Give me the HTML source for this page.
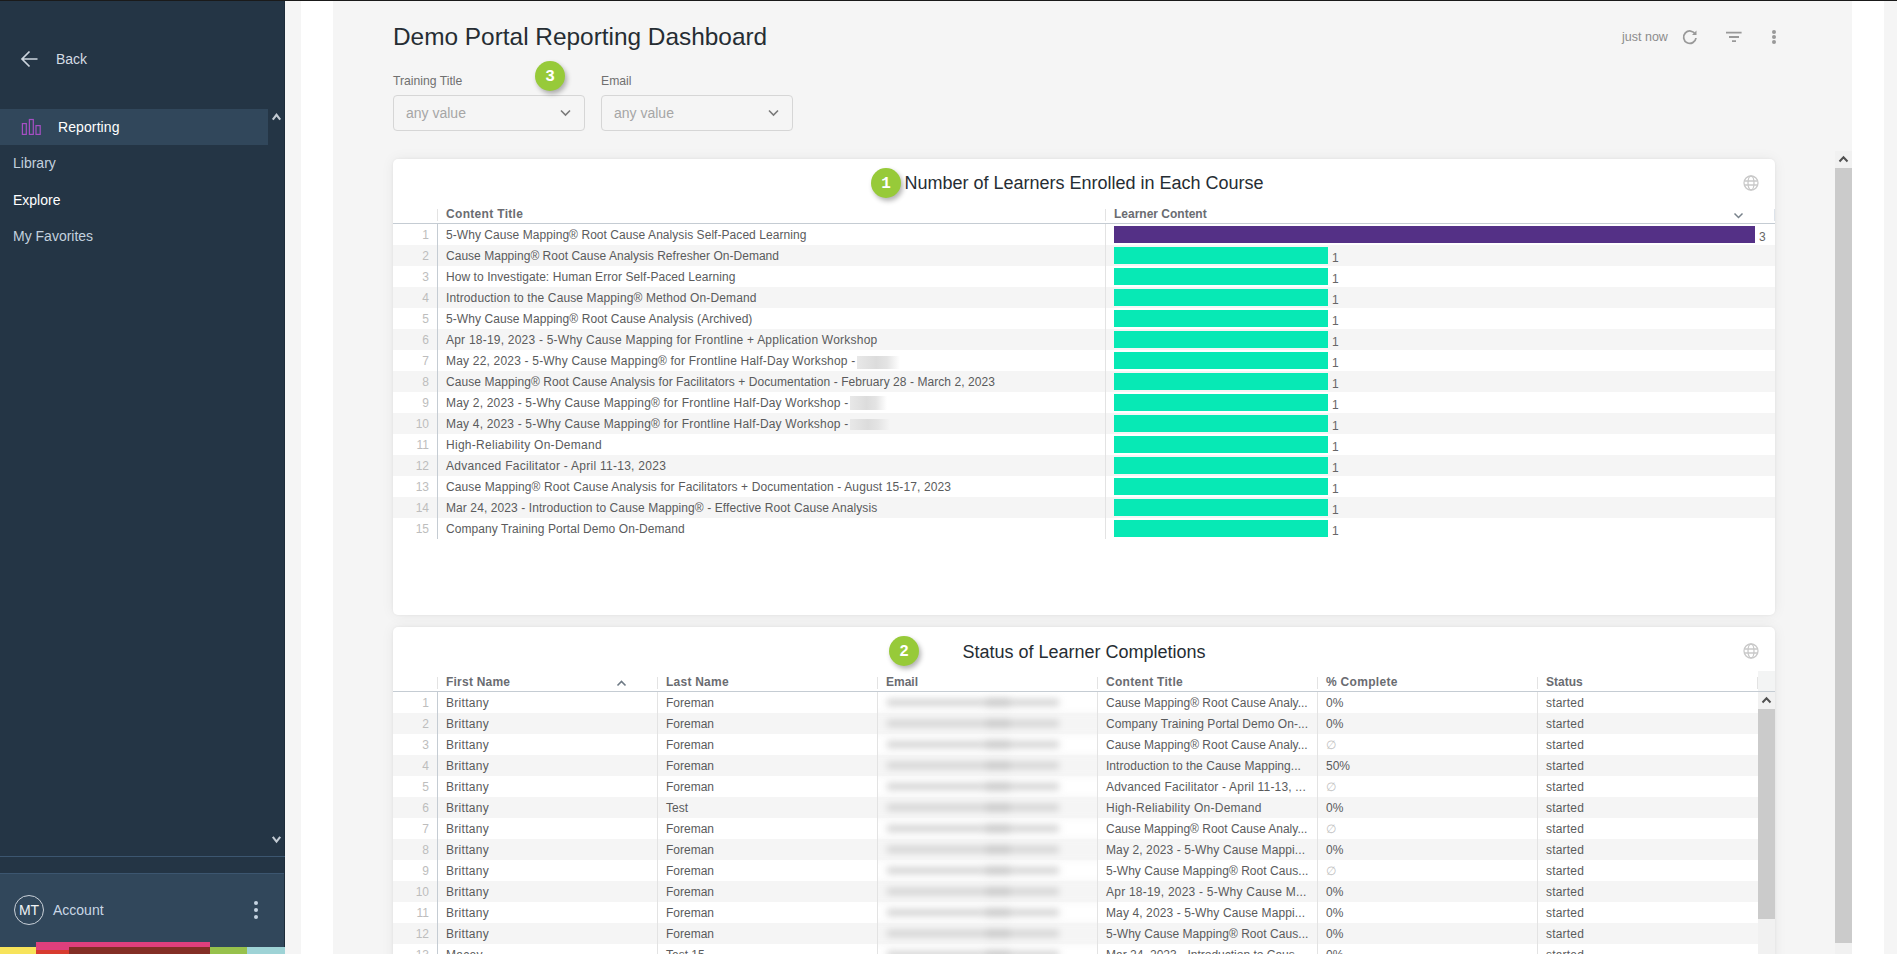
<!DOCTYPE html>
<html><head><meta charset="utf-8">
<style>
*{margin:0;padding:0;box-sizing:border-box}
html,body{width:1897px;height:954px;overflow:hidden;background:#f5f5f5;font-family:"Liberation Sans",sans-serif}
.abs{position:absolute}
.t{position:absolute;white-space:nowrap;line-height:1}
#topline{position:absolute;left:0;top:0;width:1897px;height:1px;background:#1a1a1a;z-index:50}
#side{position:absolute;left:0;top:0;width:285px;height:954px;background:#243545;border-right:1px solid #1d2c3a}
.badge{position:absolute;width:30px;height:30px;border-radius:50%;background:#97ca39;color:#fff;font:bold 16px/33px "Liberation Mono",monospace;text-align:center;box-shadow:2px 3px 5px rgba(0,0,0,.3);z-index:10}
.card{position:absolute;left:393px;width:1382px;background:#fff;border-radius:5px;box-shadow:0 0 14px rgba(0,0,0,.06),0 0 3px rgba(0,0,0,.06);overflow:hidden}
.row{position:absolute;left:0;height:21px}
.row.g{background:#f5f5f5}
.cell{position:absolute;top:0;height:21px;font-size:12px;line-height:23px;color:#5a5b5c;white-space:nowrap}
.idx{position:absolute;top:0;height:21px;width:36px;text-align:right;font-size:12px;line-height:23px;color:#bdbdbd}
.hd{position:absolute;font-weight:bold;font-size:12px;color:#6a6c71;white-space:nowrap;line-height:1}
.vsep{position:absolute;width:1px;background:#e3e3e3}
.bar{position:absolute;height:17px}
.blab{position:absolute;font-size:12px;line-height:1;color:#666;margin-top:0px}
.blur{position:absolute;height:8px;background:#d6d6d6;filter:blur(3.5px);border-radius:3px}
</style></head><body>
<div id="topline"></div>

<div id="side">
<svg class="abs" style="left:20px;top:50px" width="19" height="18" viewBox="0 0 19 18" fill="none" stroke="#ccd5de" stroke-width="1.7"><path d="M17.5 9H2.5M9.5 1.5L2 9l7.5 7.5"/></svg>
<div class="t" style="left:56px;top:52px;font-size:14px;color:#d3dbe3">Back</div>
<div class="abs" style="left:0;top:109px;width:268px;height:36px;background:#31475b"></div>
<svg class="abs" style="left:21px;top:118px" width="21" height="18" viewBox="0 0 21 18" fill="none" stroke="#a64fc4" stroke-width="1.2"><rect x="1.4" y="5.6" width="3.9" height="10.8"/><rect x="8.4" y="1.5" width="3.9" height="14.9"/><rect x="15" y="7.6" width="4.2" height="8.8"/></svg>
<div class="t" style="left:58px;top:120px;font-size:14px;letter-spacing:0.1px;color:#ffffff">Reporting</div>
<svg class="abs" style="left:271px;top:111px" width="11" height="11" viewBox="0 0 11 11" fill="none" stroke="#c2cad2" stroke-width="2.1"><path d="M1.8 8.6L5.5 3.8 9.2 8.6"/></svg>
<div class="t" style="left:13px;top:156px;font-size:14px;color:#c3d1de">Library</div>
<div class="t" style="left:13px;top:193px;font-size:14px;color:#ffffff">Explore</div>
<div class="t" style="left:13px;top:229px;font-size:14px;color:#c3d1de">My Favorites</div>
<svg class="abs" style="left:271px;top:834px" width="11" height="11" viewBox="0 0 11 11" fill="none" stroke="#c2cad2" stroke-width="2.1"><path d="M1.8 2.8L5.5 7.6 9.2 2.8"/></svg>
<div class="abs" style="left:0;top:856px;width:285px;height:1px;background:#3c5670"></div>
<div class="abs" style="left:0;top:873px;width:284px;height:81px;background:#31475b;border-top:1px solid #3c5670"></div>
<div class="abs" style="left:14px;top:895px;width:30px;height:30px;border-radius:50%;border:1.3px solid #c9d0d8"></div>
<div class="t" style="left:14px;top:903px;width:30px;text-align:center;font-size:14px;color:#f0f3f6">MT</div>
<div class="t" style="left:53px;top:903px;font-size:14px;color:#c9d7e5">Account</div>
<div class="abs" style="left:254px;top:901px;width:4px;height:4px;border-radius:50%;background:#c6d4e2"></div>
<div class="abs" style="left:254px;top:908px;width:4px;height:4px;border-radius:50%;background:#c6d4e2"></div>
<div class="abs" style="left:254px;top:915px;width:4px;height:4px;border-radius:50%;background:#c6d4e2"></div>
<div class="abs" style="left:36px;top:942px;width:174px;height:8px;background:#df3f7c"></div>
<div class="abs" style="left:0;top:947px;width:36px;height:7px;background:#f7e35a"></div>
<div class="abs" style="left:36px;top:950px;width:33px;height:4px;background:#d83b2f"></div>
<div class="abs" style="left:69px;top:947px;width:141px;height:7px;background:#832e25"></div>
<div class="abs" style="left:210px;top:947px;width:37px;height:7px;background:#97c14c"></div>
<div class="abs" style="left:247px;top:947px;width:38px;height:7px;background:#9ed3d6"></div>
</div>

<div class="abs" style="left:301px;top:0;width:32px;height:954px;background:#fff"></div>
<div class="abs" style="left:1852px;top:0;width:32px;height:954px;background:#fff"></div>
<div class="abs" style="left:1835px;top:151px;width:17px;height:803px;background:#f1f1f1"></div>
<div class="abs" style="left:1835px;top:168px;width:17px;height:775px;background:#cbcbcb"></div>
<svg class="abs" style="left:1835px;top:151px" width="17" height="17" viewBox="0 0 17 17" fill="none" stroke="#505050" stroke-width="2"><path d="M4.5 10.5L8.5 6.3 12.5 10.5"/></svg>

<div class="t" style="left:393px;top:25px;font-size:24.4px;color:#262d33">Demo Portal Reporting Dashboard</div>
<div class="t" style="left:1622px;top:31px;font-size:12.5px;color:#8c8c8c">just now</div>
<svg class="abs" style="left:1681px;top:28px" width="18" height="18" viewBox="0 0 18 18" fill="none" stroke="#999" stroke-width="1.8"><path d="M14.3 6.2A6.2 6.2 0 1 0 15 10"/><path d="M15.5 2.5v4.5h-4.5z" fill="#999" stroke="none"/></svg>
<svg class="abs" style="left:1725px;top:30px" width="18" height="14" viewBox="0 0 18 14" fill="none" stroke="#999" stroke-width="1.8"><path d="M1 2.6h15.6M4 7h10M7 11.2h4"/></svg>
<div class="abs" style="left:1772px;top:30px;width:4px;height:4px;border-radius:50%;background:#999"></div>
<div class="abs" style="left:1772px;top:35px;width:4px;height:4px;border-radius:50%;background:#999"></div>
<div class="abs" style="left:1772px;top:40px;width:4px;height:4px;border-radius:50%;background:#999"></div>
<div class="t" style="left:393px;top:75px;font-size:12.2px;color:#707070">Training Title</div>
<div class="abs" style="left:393px;top:95px;width:192px;height:36px;border:1px solid #d6d6d6;border-radius:4px"></div>
<div class="t" style="left:406px;top:106px;font-size:14px;color:#a6a6a6">any value</div>
<svg class="abs" style="left:559px;top:108px" width="13" height="10" viewBox="0 0 13 10" fill="none" stroke="#7a7a7a" stroke-width="1.6"><path d="M2 2.5l4.5 4.5 4.5-4.5"/></svg>
<div class="t" style="left:601px;top:75px;font-size:12.2px;color:#707070">Email</div>
<div class="abs" style="left:601px;top:95px;width:192px;height:36px;border:1px solid #d6d6d6;border-radius:4px"></div>
<div class="t" style="left:614px;top:106px;font-size:14px;color:#a6a6a6">any value</div>
<svg class="abs" style="left:767px;top:108px" width="13" height="10" viewBox="0 0 13 10" fill="none" stroke="#7a7a7a" stroke-width="1.6"><path d="M2 2.5l4.5 4.5 4.5-4.5"/></svg>

<div class="badge" style="left:535px;top:61px">3</div>
<div class="card" style="top:159px;height:456px">
<div class="t" style="left:0;width:1382px;text-align:center;top:15px;font-size:18px;color:#262d33">Number of Learners Enrolled in Each Course</div>
<svg class="abs" style="left:1349px;top:15px" width="18" height="18" viewBox="0 0 18 18" fill="none" stroke="#c9c9c9" stroke-width="1.3">
<circle cx="9" cy="9" r="7"/><path d="M2.3 7h13.4M2.3 11h13.4"/><ellipse cx="9" cy="9" rx="3" ry="7"/></svg>
<div class="hd" style="left:53px;top:49px;letter-spacing:0.32px">Content Title</div>
<div class="hd" style="left:721px;top:49px">Learner Content</div>
<svg class="abs" style="left:1340px;top:52px" width="11" height="9" viewBox="0 0 11 9" fill="none" stroke="#77818a" stroke-width="1.5"><path d="M1.5 2.5l4 4 4-4"/></svg>
<div class="vsep" style="left:44px;top:50px;height:12px"></div>
<div class="vsep" style="left:712px;top:50px;height:12px"></div>
<div class="vsep" style="left:1381px;top:50px;height:12px;background:#dde3ea"></div>
<div class="abs" style="left:0;top:64px;width:1382px;height:1px;background:#c5ccd3"></div>
<div class="row" style="top:65px;width:1382px">
<div class="idx">1</div>
<div class="cell" style="left:53px;letter-spacing:0.056px;">5-Why Cause Mapping® Root Cause Analysis Self-Paced Learning</div>
<div class="bar" style="left:721px;top:2px;width:641px;background:#543086"></div>
<div class="blab" style="left:1366px;top:7px">3</div>
</div>
<div class="row g" style="top:86px;width:1382px">
<div class="idx">2</div>
<div class="cell" style="left:53px;letter-spacing:0.025px;">Cause Mapping® Root Cause Analysis Refresher On-Demand</div>
<div class="bar" style="left:721px;top:2px;width:214px;background:#07e9b5"></div>
<div class="blab" style="left:939px;top:7px">1</div>
</div>
<div class="row" style="top:107px;width:1382px">
<div class="idx">3</div>
<div class="cell" style="left:53px;letter-spacing:0.064px;">How to Investigate: Human Error Self-Paced Learning</div>
<div class="bar" style="left:721px;top:2px;width:214px;background:#07e9b5"></div>
<div class="blab" style="left:939px;top:7px">1</div>
</div>
<div class="row g" style="top:128px;width:1382px">
<div class="idx">4</div>
<div class="cell" style="left:53px;letter-spacing:0.122px;">Introduction to the Cause Mapping® Method On-Demand</div>
<div class="bar" style="left:721px;top:2px;width:214px;background:#07e9b5"></div>
<div class="blab" style="left:939px;top:7px">1</div>
</div>
<div class="row" style="top:149px;width:1382px">
<div class="idx">5</div>
<div class="cell" style="left:53px;letter-spacing:0.068px;">5-Why Cause Mapping® Root Cause Analysis (Archived)</div>
<div class="bar" style="left:721px;top:2px;width:214px;background:#07e9b5"></div>
<div class="blab" style="left:939px;top:7px">1</div>
</div>
<div class="row g" style="top:170px;width:1382px">
<div class="idx">6</div>
<div class="cell" style="left:53px;letter-spacing:0.222px;">Apr 18-19, 2023 - 5-Why Cause Mapping for Frontline + Application Workshop</div>
<div class="bar" style="left:721px;top:2px;width:214px;background:#07e9b5"></div>
<div class="blab" style="left:939px;top:7px">1</div>
</div>
<div class="row" style="top:191px;width:1382px">
<div class="idx">7</div>
<div class="cell" style="left:53px;letter-spacing:0.193px;">May 22, 2023 - 5-Why Cause Mapping® for Frontline Half-Day Workshop - </div>
<div class="bar" style="left:721px;top:2px;width:214px;background:#07e9b5"></div>
<div class="blab" style="left:939px;top:7px">1</div>
</div>
<div class="row g" style="top:212px;width:1382px">
<div class="idx">8</div>
<div class="cell" style="left:53px;letter-spacing:0.064px;">Cause Mapping® Root Cause Analysis for Facilitators + Documentation - February 28 - March 2, 2023</div>
<div class="bar" style="left:721px;top:2px;width:214px;background:#07e9b5"></div>
<div class="blab" style="left:939px;top:7px">1</div>
</div>
<div class="row" style="top:233px;width:1382px">
<div class="idx">9</div>
<div class="cell" style="left:53px;letter-spacing:0.190px;">May 2, 2023 - 5-Why Cause Mapping® for Frontline Half-Day Workshop - </div>
<div class="bar" style="left:721px;top:2px;width:214px;background:#07e9b5"></div>
<div class="blab" style="left:939px;top:7px">1</div>
</div>
<div class="row g" style="top:254px;width:1382px">
<div class="idx">10</div>
<div class="cell" style="left:53px;letter-spacing:0.190px;">May 4, 2023 - 5-Why Cause Mapping® for Frontline Half-Day Workshop - </div>
<div class="bar" style="left:721px;top:2px;width:214px;background:#07e9b5"></div>
<div class="blab" style="left:939px;top:7px">1</div>
</div>
<div class="row" style="top:275px;width:1382px">
<div class="idx">11</div>
<div class="cell" style="left:53px;letter-spacing:0.276px;">High-Reliability On-Demand</div>
<div class="bar" style="left:721px;top:2px;width:214px;background:#07e9b5"></div>
<div class="blab" style="left:939px;top:7px">1</div>
</div>
<div class="row g" style="top:296px;width:1382px">
<div class="idx">12</div>
<div class="cell" style="left:53px;letter-spacing:0.272px;">Advanced Facilitator - April 11-13, 2023</div>
<div class="bar" style="left:721px;top:2px;width:214px;background:#07e9b5"></div>
<div class="blab" style="left:939px;top:7px">1</div>
</div>
<div class="row" style="top:317px;width:1382px">
<div class="idx">13</div>
<div class="cell" style="left:53px;letter-spacing:0.117px;">Cause Mapping® Root Cause Analysis for Facilitators + Documentation - August 15-17, 2023</div>
<div class="bar" style="left:721px;top:2px;width:214px;background:#07e9b5"></div>
<div class="blab" style="left:939px;top:7px">1</div>
</div>
<div class="row g" style="top:338px;width:1382px">
<div class="idx">14</div>
<div class="cell" style="left:53px;letter-spacing:0.092px;">Mar 24, 2023 - Introduction to Cause Mapping® - Effective Root Cause Analysis</div>
<div class="bar" style="left:721px;top:2px;width:214px;background:#07e9b5"></div>
<div class="blab" style="left:939px;top:7px">1</div>
</div>
<div class="row" style="top:359px;width:1382px">
<div class="idx">15</div>
<div class="cell" style="left:53px;letter-spacing:0.070px;">Company Training Portal Demo On-Demand</div>
<div class="bar" style="left:721px;top:2px;width:214px;background:#07e9b5"></div>
<div class="blab" style="left:939px;top:7px">1</div>
</div>
<div class="abs" style="left:44px;top:65px;width:1px;height:315px;background:#c5ccd3"></div>
<div class="vsep" style="left:712px;top:65px;height:315px"></div>
<div class="abs" style="left:464px;top:197px;width:43px;height:13px;background:linear-gradient(90deg,#e8e8e8 0%,#dcdcdc 45%,#e4e4e4 70%,rgba(240,240,240,0) 100%)"></div>
<div class="abs" style="left:457px;top:237px;width:37px;height:14px;background:linear-gradient(90deg,#e8e8e8 0%,#dcdcdc 45%,#e4e4e4 70%,rgba(240,240,240,0) 100%)"></div>
<div class="abs" style="left:457px;top:260px;width:40px;height:11px;background:linear-gradient(90deg,#e8e8e8 0%,#dcdcdc 45%,#e4e4e4 70%,rgba(240,240,240,0) 100%)"></div>
</div>
<div class="card" style="top:627px;height:340px">
<div class="t" style="left:0;width:1382px;text-align:center;top:16px;font-size:18px;color:#262d33">Status of Learner Completions</div>
<svg class="abs" style="left:1349px;top:15px" width="18" height="18" viewBox="0 0 18 18" fill="none" stroke="#c9c9c9" stroke-width="1.3">
<circle cx="9" cy="9" r="7"/><path d="M2.3 7h13.4M2.3 11h13.4"/><ellipse cx="9" cy="9" rx="3" ry="7"/></svg>
<div class="hd" style="left:53px;top:49px;letter-spacing:0.22px">First Name</div>
<div class="hd" style="left:273px;top:49px;letter-spacing:0.24px">Last Name</div>
<div class="hd" style="left:493px;top:49px;letter-spacing:0px">Email</div>
<div class="hd" style="left:713px;top:49px;letter-spacing:0.3px">Content Title</div>
<div class="hd" style="left:933px;top:49px;letter-spacing:0.3px">% Complete</div>
<div class="hd" style="left:1153px;top:49px;letter-spacing:0px">Status</div>
<div class="vsep" style="left:44px;top:50px;height:12px"></div>
<div class="vsep" style="left:264px;top:50px;height:12px"></div>
<div class="vsep" style="left:484px;top:50px;height:12px"></div>
<div class="vsep" style="left:704px;top:50px;height:12px"></div>
<div class="vsep" style="left:924px;top:50px;height:12px"></div>
<div class="vsep" style="left:1144px;top:50px;height:12px"></div>
<div class="vsep" style="left:1364px;top:50px;height:12px"></div>
<svg class="abs" style="left:223px;top:52px" width="11" height="9" viewBox="0 0 11 9" fill="none" stroke="#6e7a85" stroke-width="1.6"><path d="M1.5 6.5l4-4 4 4"/></svg>
<div class="abs" style="left:0;top:64px;width:1382px;height:1px;background:#c5ccd3"></div>
<div class="row" style="top:65px;width:1365px">
<div class="idx">1</div>
<div class="cell" style="left:53px;letter-spacing:0.3px">Brittany</div>
<div class="cell" style="left:273px">Foreman</div>
<div class="cell" style="left:713px;letter-spacing:0.009px;">Cause Mapping® Root Cause Analy...</div>
<div class="cell" style="left:933px">0%</div>
<div class="cell" style="left:1153px;letter-spacing:0.2px">started</div>
</div>
<div class="row g" style="top:86px;width:1365px">
<div class="idx">2</div>
<div class="cell" style="left:53px;letter-spacing:0.3px">Brittany</div>
<div class="cell" style="left:273px">Foreman</div>
<div class="cell" style="left:713px;letter-spacing:0.038px;">Company Training Portal Demo On-...</div>
<div class="cell" style="left:933px">0%</div>
<div class="cell" style="left:1153px;letter-spacing:0.2px">started</div>
</div>
<div class="row" style="top:107px;width:1365px">
<div class="idx">3</div>
<div class="cell" style="left:53px;letter-spacing:0.3px">Brittany</div>
<div class="cell" style="left:273px">Foreman</div>
<div class="cell" style="left:713px;letter-spacing:0.009px;">Cause Mapping® Root Cause Analy...</div>
<div class="cell" style="left:933px;color:#c2c2c2">∅</div>
<div class="cell" style="left:1153px;letter-spacing:0.2px">started</div>
</div>
<div class="row g" style="top:128px;width:1365px">
<div class="idx">4</div>
<div class="cell" style="left:53px;letter-spacing:0.3px">Brittany</div>
<div class="cell" style="left:273px">Foreman</div>
<div class="cell" style="left:713px;letter-spacing:0.040px;">Introduction to the Cause Mapping...</div>
<div class="cell" style="left:933px">50%</div>
<div class="cell" style="left:1153px;letter-spacing:0.2px">started</div>
</div>
<div class="row" style="top:149px;width:1365px">
<div class="idx">5</div>
<div class="cell" style="left:53px;letter-spacing:0.3px">Brittany</div>
<div class="cell" style="left:273px">Foreman</div>
<div class="cell" style="left:713px;letter-spacing:0.189px;">Advanced Facilitator - April 11-13, ...</div>
<div class="cell" style="left:933px;color:#c2c2c2">∅</div>
<div class="cell" style="left:1153px;letter-spacing:0.2px">started</div>
</div>
<div class="row g" style="top:170px;width:1365px">
<div class="idx">6</div>
<div class="cell" style="left:53px;letter-spacing:0.3px">Brittany</div>
<div class="cell" style="left:273px">Test</div>
<div class="cell" style="left:713px;letter-spacing:0.268px;">High-Reliability On-Demand</div>
<div class="cell" style="left:933px">0%</div>
<div class="cell" style="left:1153px;letter-spacing:0.2px">started</div>
</div>
<div class="row" style="top:191px;width:1365px">
<div class="idx">7</div>
<div class="cell" style="left:53px;letter-spacing:0.3px">Brittany</div>
<div class="cell" style="left:273px">Foreman</div>
<div class="cell" style="left:713px;">Cause Mapping® Root Cause Analy...</div>
<div class="cell" style="left:933px;color:#c2c2c2">∅</div>
<div class="cell" style="left:1153px;letter-spacing:0.2px">started</div>
</div>
<div class="row g" style="top:212px;width:1365px">
<div class="idx">8</div>
<div class="cell" style="left:53px;letter-spacing:0.3px">Brittany</div>
<div class="cell" style="left:273px">Foreman</div>
<div class="cell" style="left:713px;letter-spacing:0.109px;">May 2, 2023 - 5-Why Cause Mappi...</div>
<div class="cell" style="left:933px">0%</div>
<div class="cell" style="left:1153px;letter-spacing:0.2px">started</div>
</div>
<div class="row" style="top:233px;width:1365px">
<div class="idx">9</div>
<div class="cell" style="left:53px;letter-spacing:0.3px">Brittany</div>
<div class="cell" style="left:273px">Foreman</div>
<div class="cell" style="left:713px;letter-spacing:0.044px;">5-Why Cause Mapping® Root Caus...</div>
<div class="cell" style="left:933px;color:#c2c2c2">∅</div>
<div class="cell" style="left:1153px;letter-spacing:0.2px">started</div>
</div>
<div class="row g" style="top:254px;width:1365px">
<div class="idx">10</div>
<div class="cell" style="left:53px;letter-spacing:0.3px">Brittany</div>
<div class="cell" style="left:273px">Foreman</div>
<div class="cell" style="left:713px;letter-spacing:0.230px;">Apr 18-19, 2023 - 5-Why Cause M...</div>
<div class="cell" style="left:933px">0%</div>
<div class="cell" style="left:1153px;letter-spacing:0.2px">started</div>
</div>
<div class="row" style="top:275px;width:1365px">
<div class="idx">11</div>
<div class="cell" style="left:53px;letter-spacing:0.3px">Brittany</div>
<div class="cell" style="left:273px">Foreman</div>
<div class="cell" style="left:713px;letter-spacing:0.109px;">May 4, 2023 - 5-Why Cause Mappi...</div>
<div class="cell" style="left:933px">0%</div>
<div class="cell" style="left:1153px;letter-spacing:0.2px">started</div>
</div>
<div class="row g" style="top:296px;width:1365px">
<div class="idx">12</div>
<div class="cell" style="left:53px;letter-spacing:0.3px">Brittany</div>
<div class="cell" style="left:273px">Foreman</div>
<div class="cell" style="left:713px;letter-spacing:0.044px;">5-Why Cause Mapping® Root Caus...</div>
<div class="cell" style="left:933px">0%</div>
<div class="cell" style="left:1153px;letter-spacing:0.2px">started</div>
</div>
<div class="row" style="top:317px;width:1365px">
<div class="idx">13</div>
<div class="cell" style="left:53px;letter-spacing:0.3px">Macey</div>
<div class="cell" style="left:273px">Test 15</div>
<div class="cell" style="left:713px;">Mar 24, 2023 - Introduction to Caus...</div>
<div class="cell" style="left:933px">0%</div>
<div class="cell" style="left:1153px;letter-spacing:0.2px">started</div>
</div>
<div class="abs" style="left:485px;top:65px;width:219px;height:290px;overflow:hidden">
<div class="abs" style="left:-20px;top:-10px;width:260px;height:320px;filter:blur(3.6px)">
<div class="abs" style="left:29px;top:17px;width:172px;height:7px;background:#d3d3d3"></div>
<div class="abs" style="left:128px;top:16px;width:24px;height:9px;background:#cbcbcb"></div>
<div class="abs" style="left:0;top:31px;width:260px;height:21px;background:#f5f5f5"></div>
<div class="abs" style="left:29px;top:38px;width:172px;height:7px;background:#d3d3d3"></div>
<div class="abs" style="left:128px;top:37px;width:24px;height:9px;background:#cbcbcb"></div>
<div class="abs" style="left:29px;top:59px;width:172px;height:7px;background:#d3d3d3"></div>
<div class="abs" style="left:128px;top:58px;width:24px;height:9px;background:#cbcbcb"></div>
<div class="abs" style="left:0;top:73px;width:260px;height:21px;background:#f5f5f5"></div>
<div class="abs" style="left:29px;top:80px;width:172px;height:7px;background:#d3d3d3"></div>
<div class="abs" style="left:128px;top:79px;width:24px;height:9px;background:#cbcbcb"></div>
<div class="abs" style="left:29px;top:101px;width:172px;height:7px;background:#d3d3d3"></div>
<div class="abs" style="left:128px;top:100px;width:24px;height:9px;background:#cbcbcb"></div>
<div class="abs" style="left:0;top:115px;width:260px;height:21px;background:#f5f5f5"></div>
<div class="abs" style="left:29px;top:122px;width:172px;height:7px;background:#d3d3d3"></div>
<div class="abs" style="left:128px;top:121px;width:24px;height:9px;background:#cbcbcb"></div>
<div class="abs" style="left:29px;top:143px;width:172px;height:7px;background:#d3d3d3"></div>
<div class="abs" style="left:128px;top:142px;width:24px;height:9px;background:#cbcbcb"></div>
<div class="abs" style="left:0;top:157px;width:260px;height:21px;background:#f5f5f5"></div>
<div class="abs" style="left:29px;top:164px;width:172px;height:7px;background:#d3d3d3"></div>
<div class="abs" style="left:128px;top:163px;width:24px;height:9px;background:#cbcbcb"></div>
<div class="abs" style="left:29px;top:185px;width:172px;height:7px;background:#d3d3d3"></div>
<div class="abs" style="left:128px;top:184px;width:24px;height:9px;background:#cbcbcb"></div>
<div class="abs" style="left:0;top:199px;width:260px;height:21px;background:#f5f5f5"></div>
<div class="abs" style="left:29px;top:206px;width:172px;height:7px;background:#d3d3d3"></div>
<div class="abs" style="left:128px;top:205px;width:24px;height:9px;background:#cbcbcb"></div>
<div class="abs" style="left:29px;top:227px;width:172px;height:7px;background:#d3d3d3"></div>
<div class="abs" style="left:128px;top:226px;width:24px;height:9px;background:#cbcbcb"></div>
<div class="abs" style="left:0;top:241px;width:260px;height:21px;background:#f5f5f5"></div>
<div class="abs" style="left:29px;top:248px;width:172px;height:7px;background:#d3d3d3"></div>
<div class="abs" style="left:128px;top:247px;width:24px;height:9px;background:#cbcbcb"></div>
<div class="abs" style="left:29px;top:269px;width:172px;height:7px;background:#d3d3d3"></div>
<div class="abs" style="left:128px;top:268px;width:24px;height:9px;background:#cbcbcb"></div>
<div class="abs" style="left:0;top:283px;width:260px;height:21px;background:#f5f5f5"></div>
</div></div>
<div class="abs" style="left:44px;top:65px;width:1px;height:300px;background:#c5ccd3"></div>
<div class="vsep" style="left:264px;top:65px;height:300px"></div>
<div class="vsep" style="left:484px;top:65px;height:300px"></div>
<div class="vsep" style="left:704px;top:65px;height:300px"></div>
<div class="vsep" style="left:924px;top:65px;height:300px"></div>
<div class="vsep" style="left:1144px;top:65px;height:300px"></div>
<div class="abs" style="left:1365px;top:44px;width:17px;height:20px;background:#f3f4f4"></div>
<div class="abs" style="left:1365px;top:65px;width:17px;height:300px;background:#f1f1f1"></div>
<div class="abs" style="left:1365px;top:82px;width:17px;height:210px;background:#cbcbcb"></div>
<svg class="abs" style="left:1365px;top:65px" width="17" height="17" viewBox="0 0 17 17" fill="none" stroke="#505050" stroke-width="2"><path d="M4.5 10.5L8.5 6.3 12.5 10.5"/></svg>
</div>
<div class="badge" style="left:871px;top:168px">1</div>
<div class="badge" style="left:889px;top:636px">2</div>
</body></html>
